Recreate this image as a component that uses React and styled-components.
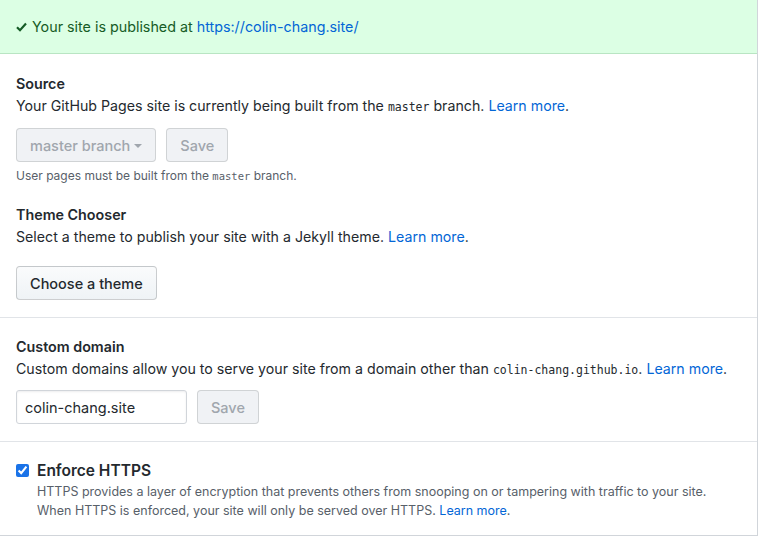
import React from "react";
import styled, { createGlobalStyle } from "styled-components";

const GlobalStyle = createGlobalStyle`
  body {
    margin: 0;
    background: #fff;
    font-family: Inter, "Liberation Sans", sans-serif;
    color: #24292e;
  }
`;

const Box = styled.div`
  width: 757px;
  border-right: 1px solid #d1d5da;
  border-bottom: 1px solid #d1d5da;
`;

const Flash = styled.div`
  height: 53px;
  display: flex;
  align-items: center;
  gap: 5px;
  padding: 0 16px;
  background: #dcffe4;
  border-bottom: 1px solid #b9e5c3;
  color: #165c26;
  font-size: 14.3px;
`;

const Link = styled.a`
  color: #0366d6;
  text-decoration: none;
`;

const Section = styled.div`
  padding: ${(p) => p.$pad || "20px 16px 16px"};
  border-bottom: ${(p) => (p.$last ? "none" : "1px solid #e1e4e8")};
`;

const Group = styled.div`
  margin-top: ${(p) => p.$mt || 0}px;
`;

const Heading = styled.h3`
  margin: 0;
  font-size: 14.3px;
  font-weight: 600;
  line-height: 22px;
`;

const Desc = styled.p`
  margin: 0;
  font-size: 14.2px;
  line-height: 22px;
`;

const Code = styled.code`
  font-family: "DejaVu Sans Mono", "Liberation Mono", monospace;
  font-size: ${(p) => p.$size || 11.5}px;
`;

const Row = styled.div`
  display: flex;
  gap: 10px;
  margin-top: ${(p) => p.$mt || 0}px;
`;

const Button = styled.button`
  height: 34px;
  padding: 0 13px;
  border: 1px solid;
  border-radius: 4px;
  font-family: inherit;
  font-size: 14.5px;
  font-weight: 500;
  display: flex;
  align-items: center;
  gap: 4px;
  background: ${(p) => (p.disabled ? "#f0f2f5" : "linear-gradient(#fafbfc, #eff3f6)")};
  color: ${(p) => (p.disabled ? "#a0a6ad" : "#24292e")};
  border-color: ${(p) => (p.disabled ? "rgba(27,31,35,0.15)" : "rgba(27,31,35,0.2)")};
`;

const Caret = styled.span`
  width: 0;
  height: 0;
  border-left: 4px solid transparent;
  border-right: 4px solid transparent;
  border-top: 4px solid currentColor;
  margin-top: 2px;
`;

const Note = styled.p`
  margin: 5px 0 0;
  font-size: 12px;
  color: #586069;
  line-height: 18px;
`;

const Input = styled.input`
  width: 171px;
  height: 34px;
  box-sizing: border-box;
  padding: 0 8px;
  border: 1px solid #d1d5da;
  border-radius: 3px;
  font-family: inherit;
  font-size: 14.5px;
  color: #24292e;
  box-shadow: inset 0 1px 2px rgba(27, 31, 35, 0.075);
`;

const CheckRow = styled.label`
  display: flex;
  align-items: center;
  gap: 8px;
  font-size: 15.5px;
  font-weight: 600;
`;

const Check = styled.input`
  margin: 0;
  width: 13px;
  height: 13px;
  accent-color: #1a73e8;
`;

const Help = styled.p`
  margin: 2px 0 0 21px;
  font-size: 12.5px;
  line-height: 19px;
  color: #586069;
`;

const CheckIcon = () => (
  <svg width="11" height="10" viewBox="0 0 11 10" fill="none" stroke="#165c26" strokeWidth="2.2">
    <path d="M1 5.2l3 3 6-6.6" />
  </svg>
);

export default function App() {
  return (
    <>
      <GlobalStyle />
      <Box>
        <Flash>
          <CheckIcon />
          <span>
            Your site is published at <Link href="#">https://colin-chang.site/</Link>
          </span>
        </Flash>

        <Section $pad="19px 16px 17px">
          <Group>
            <Heading>Source</Heading>
            <Desc>
              Your GitHub Pages site is currently being built from the <Code>master</Code> branch.{" "}
              <Link href="#">Learn more</Link>.
            </Desc>
            <Row $mt={10}>
              <Button disabled>
                master branch <Caret />
              </Button>
              <Button disabled>Save</Button>
            </Row>
            <Note>
              User pages must be built from the <Code $size={10.5}>master</Code> branch.
            </Note>
          </Group>
          <Group $mt={19}>
            <Heading>Theme Chooser</Heading>
            <Desc>
              Select a theme to publish your site with a Jekyll theme. <Link href="#">Learn more</Link>.
            </Desc>
            <Row $mt={18}>
              <Button>Choose a theme</Button>
            </Row>
          </Group>
        </Section>

        <Section $pad="18px 16px 17px">
          <Heading>Custom domain</Heading>
          <Desc>
            Custom domains allow you to serve your site from a domain other than{" "}
            <Code>colin-chang.github.io</Code>. <Link href="#">Learn more</Link>.
          </Desc>
          <Row $mt={9}>
            <Input defaultValue="colin-chang.site" />
            <Button disabled>Save</Button>
          </Row>
        </Section>

        <Section $pad="19px 16px 15px" $last>
          <CheckRow>
            <Check type="checkbox" defaultChecked />
            Enforce HTTPS
          </CheckRow>
          <Help>
            HTTPS provides a layer of encryption that prevents others from snooping on or tampering with traffic to your site.
            <br />
            When HTTPS is enforced, your site will only be served over HTTPS. <Link href="#">Learn more</Link>.
          </Help>
        </Section>
      </Box>
    </>
  );
}
